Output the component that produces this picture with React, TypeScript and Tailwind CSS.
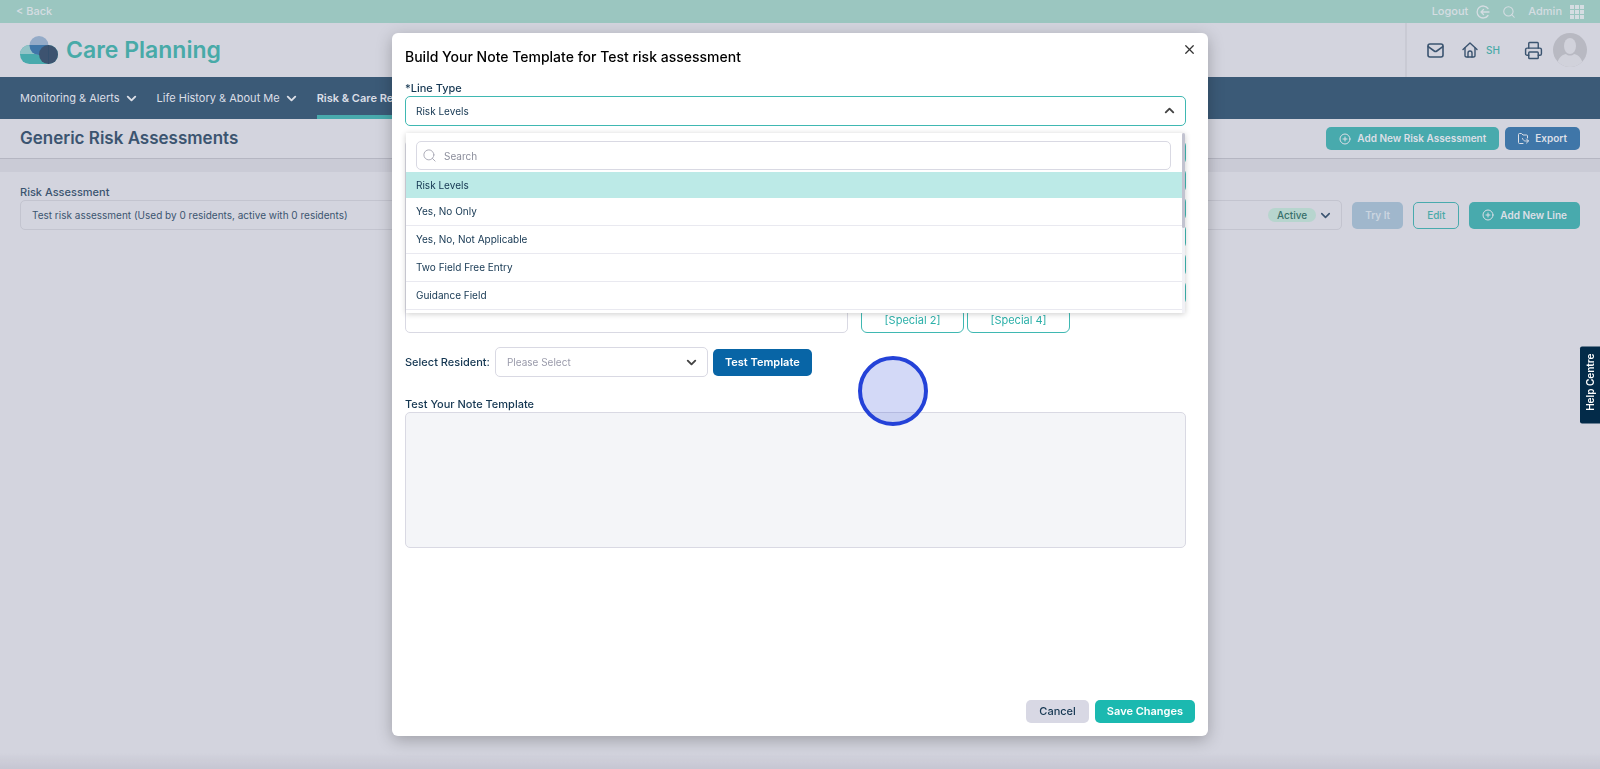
import React from "react";
import { ChevronDown, ChevronUp, CirclePlus, Printer, Search, X } from "lucide-react";

const lineTypes = [
	"Risk Levels",
	"Yes, No Only",
	"Yes, No, Not Applicable",
	"Two Field Free Entry",
	"Guidance Field",
];

const navItems = [
	{ label: "Monitoring & Alerts", active: false },
	{ label: "Life History & About Me", active: false },
	{ label: "Risk & Care Reviews", active: true },
];

function Logo() {
	return (
		<svg width="38" height="28" viewBox="0 0 38 28" aria-hidden="true">
			<defs>
				<clipPath id="upper">
					<rect width="38" height="18" />
				</clipPath>
				<clipPath id="blend">
					<rect y="9" width="38" height="19" />
				</clipPath>
			</defs>
			<rect y="9" width="38" height="19" rx="9.5" fill="#48aaad" />
			<rect y="9" width="32" height="19" rx="9.5" fill="#92c3c7" clipPath="url(#upper)" />
			<circle cx="19" cy="9.5" r="9.5" fill="#94abc8" />
			<circle cx="19" cy="9.5" r="9.5" fill="#3f76a8" clipPath="url(#blend)" />
			<circle cx="28.5" cy="18.5" r="9.5" fill="#3d5370" />
			<path d="M28.5 9v19" stroke="#34506e" strokeWidth="1" />
		</svg>
	);
}

function LogoutIcon() {
	return (
		<svg width="14" height="14" viewBox="0 0 14 14" fill="none" stroke="currentColor" strokeWidth="1.3" strokeLinecap="round" strokeLinejoin="round" aria-hidden="true">
			<path d="M12 3.5A6 6 0 1 0 12 10.5" />
			<path d="M13 7H5M7.5 4.5 5 7l2.5 2.5" />
		</svg>
	);
}

function GridIcon() {
	return (
		<svg width="14" height="14" viewBox="0 0 14 14" fill="currentColor" aria-hidden="true">
			{[0, 5, 10].map((y) =>
				[0, 5, 10].map((x) => <rect key={`${x}-${y}`} x={x} y={y} width="4" height="4" />),
			)}
		</svg>
	);
}

function MailIcon() {
	return (
		<svg width="17" height="15" viewBox="0 0 17 15" fill="none" stroke="currentColor" strokeWidth="1.6" strokeLinecap="round" strokeLinejoin="round" aria-hidden="true">
			<rect x="1" y="1" width="15" height="13" rx="2" />
			<path d="M1.200 3.600 7.200 8a2.200 2.200 0 0 0 2.600 0l6-4.400" />
		</svg>
	);
}

function HomeIcon() {
	return (
		<svg width="16" height="16" viewBox="0 0 16 16" fill="none" stroke="currentColor" strokeWidth="1.4" strokeLinecap="round" strokeLinejoin="round" aria-hidden="true">
			<path d="M1 7.5 8 1l7 6.5" />
			<path d="M3 6v7.3A1.5 1.5 0 0 0 4.5 15h7a1.5 1.5 0 0 0 1.5-1.700V6" />
			<path d="M6 15v-4a2 2 0 0 1 4 0v4" />
		</svg>
	);
}

function ExportIcon() {
	return (
		<svg width="11" height="11" viewBox="0 0 11 11" fill="none" stroke="currentColor" strokeWidth="1" strokeLinecap="round" strokeLinejoin="round" aria-hidden="true">
			<path d="M5 10.5H1.5a1 1 0 0 1-1-1v-8a1 1 0 0 1 1-1h2L5 2h3.500a1 1 0 0 1 1 1v2" />
			<path d="M4.500 5.500c.5 1.500 1.500 2.500 3 2.500h3M8.500 6l2 2-2 2" />
		</svg>
	);
}

function Avatar() {
	return (
		<svg width="34" height="34" viewBox="0 0 34 34" aria-hidden="true">
			<defs>
				<clipPath id="avatar">
					<circle cx="17" cy="17" r="17" />
				</clipPath>
			</defs>
			<g clipPath="url(#avatar)">
				<rect width="34" height="34" fill="#b8b9c2" />
				<ellipse cx="17" cy="13" rx="6" ry="8" fill="#d1d2db" />
				<path d="M4 34c0-8 4-12 9-13 2 2 6 2 8 0 5 1 9 5 9 13z" fill="#d1d2db" />
			</g>
		</svg>
	);
}

function TopBar() {
	return (
		<div className="flex h-[23px] items-center justify-between bg-[#9bc6c0] px-4 text-[11px] font-medium text-[#d5dde2]">
			<a href="#back">&lt; Back</a>
			<div className="flex items-center gap-3">
				<a href="#logout" className="flex items-center gap-2">
					Logout
					<LogoutIcon />
				</a>
				<button type="button" aria-label="Search">
					<Search size={14} strokeWidth={1.8} />
				</button>
				<a href="#admin" className="flex items-center gap-2">
					Admin
					<GridIcon />
				</a>
			</div>
		</div>
	);
}

function Header() {
	return (
		<header className="flex h-[54px] items-center justify-between pr-[13px] pl-5">
			<div className="flex items-center gap-2">
				<Logo />
				<span className="text-[23px] font-semibold text-[#48aaa8]">Care Planning</span>
			</div>
			<div className="flex h-full items-center border-l-2 border-[#c9cad4] pl-5 text-[#3b5470]">
				<button type="button" aria-label="Messages">
					<MailIcon />
				</button>
				<a href="#home" className="ml-[18px] flex items-center gap-2 text-[10px] font-medium text-[#48aaa8]">
					<span className="text-[#3b5470]">
						<HomeIcon />
					</span>
					SH
				</a>
				<button type="button" aria-label="Print" className="ml-6">
					<Printer size={19} strokeWidth={1.8} />
				</button>
				<button type="button" aria-label="Account" className="ml-[10px]">
					<Avatar />
				</button>
			</div>
		</header>
	);
}

function Navigation() {
	return (
		<nav className="flex h-[42px] gap-[18px] bg-[#3b5a77] pl-5 text-[11px] text-[#dcdfe7]">
			{navItems.map((item) => (
				<a
					key={item.label}
					href="#nav"
					className={
						item.active
							? "flex items-center gap-1 border-b-4 border-[#48aaad] pt-1 font-semibold"
							: "flex items-center gap-1"
					}
				>
					{item.label}
					<ChevronDown size={15} strokeWidth={3} />
				</a>
			))}
		</nav>
	);
}

function RiskAssessments() {
	return (
		<main>
			<div className="flex h-10 items-center justify-between border-b border-[#b5b6c2] px-5">
				<h1 className="text-[17px] font-semibold text-[#3b5470]">Generic Risk Assessments</h1>
				<div className="flex gap-[6px] text-[10px] font-semibold text-[#dcdfe7]">
					<button type="button" className="flex h-[23px] items-center gap-[6px] rounded-[5px] bg-[#48aaad] px-[13px]">
						<CirclePlus size={12} strokeWidth={2} />
						Add New Risk Assessment
					</button>
					<button type="button" className="flex h-[23px] items-center gap-[6px] rounded-[5px] bg-[#3f76a8] px-[13px]">
						<ExportIcon />
						Export
					</button>
				</div>
			</div>
			<div className="h-[13px] bg-[#cacbd6]" />
			<div className="px-5 pt-3 text-[11px] text-[#3b5470]">
				<label htmlFor="assessment" className="block h-4 leading-4 font-medium">
					Risk Assessment
				</label>
				<div className="flex items-center gap-[10px] text-[10px]">
					<div className="relative grow">
						<select id="assessment" className="block h-[30px] w-full appearance-none rounded-[5px] border border-[#c3c4cf] pl-[11px]">
							<option>Test risk assessment (Used by 0 residents, active with 0 residents)</option>
						</select>
						<div className="pointer-events-none absolute inset-y-0 right-[9px] flex items-center gap-[2px]">
							<span className="flex h-[14px] items-center rounded-full bg-[#b7d5ce] px-[9px] font-medium text-[#38706b]">
								Active
							</span>
							<ChevronDown size={15} strokeWidth={2.5} />
						</div>
					</div>
					<button type="button" disabled className="h-[27px] rounded-[5px] bg-[#a0b7cc] px-[13px] font-semibold text-[#cbd5e0]">
						Try It
					</button>
					<button type="button" className="h-[27px] rounded-[5px] border border-[#48aaad] px-[13px] font-medium text-[#48aaa8]">
						Edit
					</button>
					<button type="button" className="flex h-[27px] items-center gap-[6px] rounded-[5px] bg-[#48aaad] px-[13px] font-semibold text-[#dcdfe7]">
						<CirclePlus size={12} strokeWidth={2} />
						Add New Line
					</button>
				</div>
			</div>
		</main>
	);
}

function LineTypeMenu({ selected, onSelect }: { selected: string; onSelect: (type: string) => void }) {
	return (
		<div className="absolute top-[37px] right-px left-px z-10 flex h-[180px] bg-white shadow-[0_1px_6px_rgba(0,0,0,0.2)]">
			<div className="flex grow flex-col overflow-hidden">
				<div className="relative mt-2 mr-[11px] mb-[2px] ml-[10px]">
					<Search size={15} strokeWidth={1.5} className="absolute top-[7px] left-[6px] text-[#a8a8b4]" />
					<input
						type="text"
						aria-label="Search"
						placeholder="Search"
						className="block h-[29px] w-full rounded-[5px] border border-[#d9d9e3] pl-[27px] placeholder:text-[#8b8d9b]"
					/>
				</div>
				<ul role="listbox" aria-label="Line Type">
					{lineTypes.map((type) => (
						<li
							key={type}
							role="option"
							aria-selected={type === selected}
							onClick={() => onSelect(type)}
							className={
								type === selected
									? "flex h-[26px] cursor-pointer items-center bg-[#bceae7] pl-[10px]"
									: "flex h-[28px] cursor-pointer items-center border-b border-[#e9e9f0] pl-[10px] hover:bg-gray-50"
							}
						>
							{type}
						</li>
					))}
				</ul>
			</div>
			<div className="w-[3px] bg-[#f1f1f5]">
				<div className="h-[95px] rounded-full bg-[#c2c3d0]" />
			</div>
		</div>
	);
}

function TemplateDialog() {
	const [lineType, setLineType] = React.useState<string>("Risk Levels");
	const [menuOpen, setMenuOpen] = React.useState<boolean>(true);

	return (
		<div
			role="dialog"
			aria-labelledby="dialog-title"
			className="flex w-full max-w-[816px] flex-col rounded-md bg-white p-[13px] text-[11px] text-[#143651] shadow-[0_4px_16px_rgba(0,0,0,0.25)]"
		>
			<div className="flex items-start justify-between">
				<h2 id="dialog-title" className="text-[14px] leading-[22px] font-medium text-black">
					Build Your Note Template for Test risk assessment
				</h2>
				<button type="button" aria-label="Close" className="-mt-1 -mr-[2px] text-[#333]">
					<X size={15} strokeWidth={2} />
				</button>
			</div>

			<div className="pr-[9px]">
				<label htmlFor="line-type" className="mt-3 block h-4 leading-4 font-medium">
					*Line Type
				</label>
				<div className="relative text-[10px]">
					<select
						id="line-type"
						value={lineType}
						onChange={(event) => setLineType(event.target.value)}
						className="block h-[30px] w-full appearance-none rounded-[5px] border border-[#3fb8b2] pl-[10px]"
					>
						{lineTypes.map((type) => (
							<option key={type}>{type}</option>
						))}
					</select>
					<button
						type="button"
						aria-label="Toggle line types"
						onClick={() => setMenuOpen(!menuOpen)}
						className="absolute top-[7px] right-[9px] text-[#444]"
					>
						<ChevronUp size={15} strokeWidth={3} />
					</button>
					{menuOpen ? <LineTypeMenu selected={lineType} onSelect={setLineType} /> : ""}
				</div>

				<div className="mt-[14px] flex gap-[13px]">
					<textarea aria-label="Note template" className="block w-[443px] resize-none rounded-[5px] border border-[#d9d9e3]" />
					<div className="grid grow grid-cols-[103px_103px_1fr] gap-[3px]">
						{[0, 1, 2, 3, 4, 5].map((row) => (
							<button key={row} type="button" tabIndex={-1} className="col-span-3 h-[25px] rounded-md border border-[#3fb8b2]" />
						))}
						<button type="button" className="h-[25px] rounded-md border border-[#3fb8b2] text-[#2cb0a9]">
							[Special 2]
						</button>
						<button type="button" className="h-[25px] rounded-md border border-[#3fb8b2] text-[#2cb0a9]">
							[Special 4]
						</button>
					</div>
				</div>

				<div className="mt-[14px] flex items-center gap-[5px]">
					<label htmlFor="resident" className="font-medium">
						Select Resident:
					</label>
					<div className="relative w-[213px] text-[10px]">
						<select id="resident" className="block h-[30px] w-full appearance-none rounded-[5px] border border-[#d9d9e3] pl-[11px] text-[#9a9bab]">
							<option>Please Select</option>
						</select>
						<ChevronDown size={15} strokeWidth={3} className="pointer-events-none absolute top-2 right-[9px] text-[#444]" />
					</div>
					<button type="button" className="h-[27px] rounded-[5px] bg-[#0865a6] px-3 font-semibold text-white">
						Test Template
					</button>
				</div>

				<label htmlFor="test-template" className="mt-[19px] block h-4 leading-4 font-medium">
					Test Your Note Template
				</label>
				<textarea
					id="test-template"
					readOnly
					className="block h-[136px] w-full resize-none rounded-[5px] border border-[#d9d9e3] bg-[#f4f5f8]"
				/>
			</div>

			<div className="mt-auto flex justify-end gap-[6px]">
				<button type="button" className="h-[23px] rounded-[5px] bg-[#d8d8e4] px-[13px] font-medium">
					Cancel
				</button>
				<button type="button" className="h-[23px] rounded-[5px] bg-[#1bb9b0] px-3 font-semibold text-white">
					Save Changes
				</button>
			</div>
		</div>
	);
}

export default function App() {
	return (
		<div className="relative min-h-screen overflow-hidden bg-[#d3d4de] font-[Inter,sans-serif]">
			<TopBar />
			<Header />
			<Navigation />
			<RiskAssessments />

			<div className="fixed inset-x-0 bottom-0 h-4 bg-linear-to-b from-transparent to-[#c6c6d2]" />
			<div className="fixed inset-0 flex justify-center py-[33px]">
				<TemplateDialog />
			</div>

			<button
				type="button"
				className="fixed top-1/2 right-0 h-[77px] w-5 -translate-y-1/2 rounded-l-xs bg-[#032b49] text-[10px] font-semibold text-white"
			>
				<span className="inline-block rotate-180 [writing-mode:vertical-rl]">Help Centre</span>
			</button>

			{/* click marker */}
			<div className="pointer-events-none fixed top-[356px] left-[858px] h-[70px] w-[70px] rounded-full border-4 border-[#2442d8] bg-[#2442d8]/20" />
		</div>
	);
}
